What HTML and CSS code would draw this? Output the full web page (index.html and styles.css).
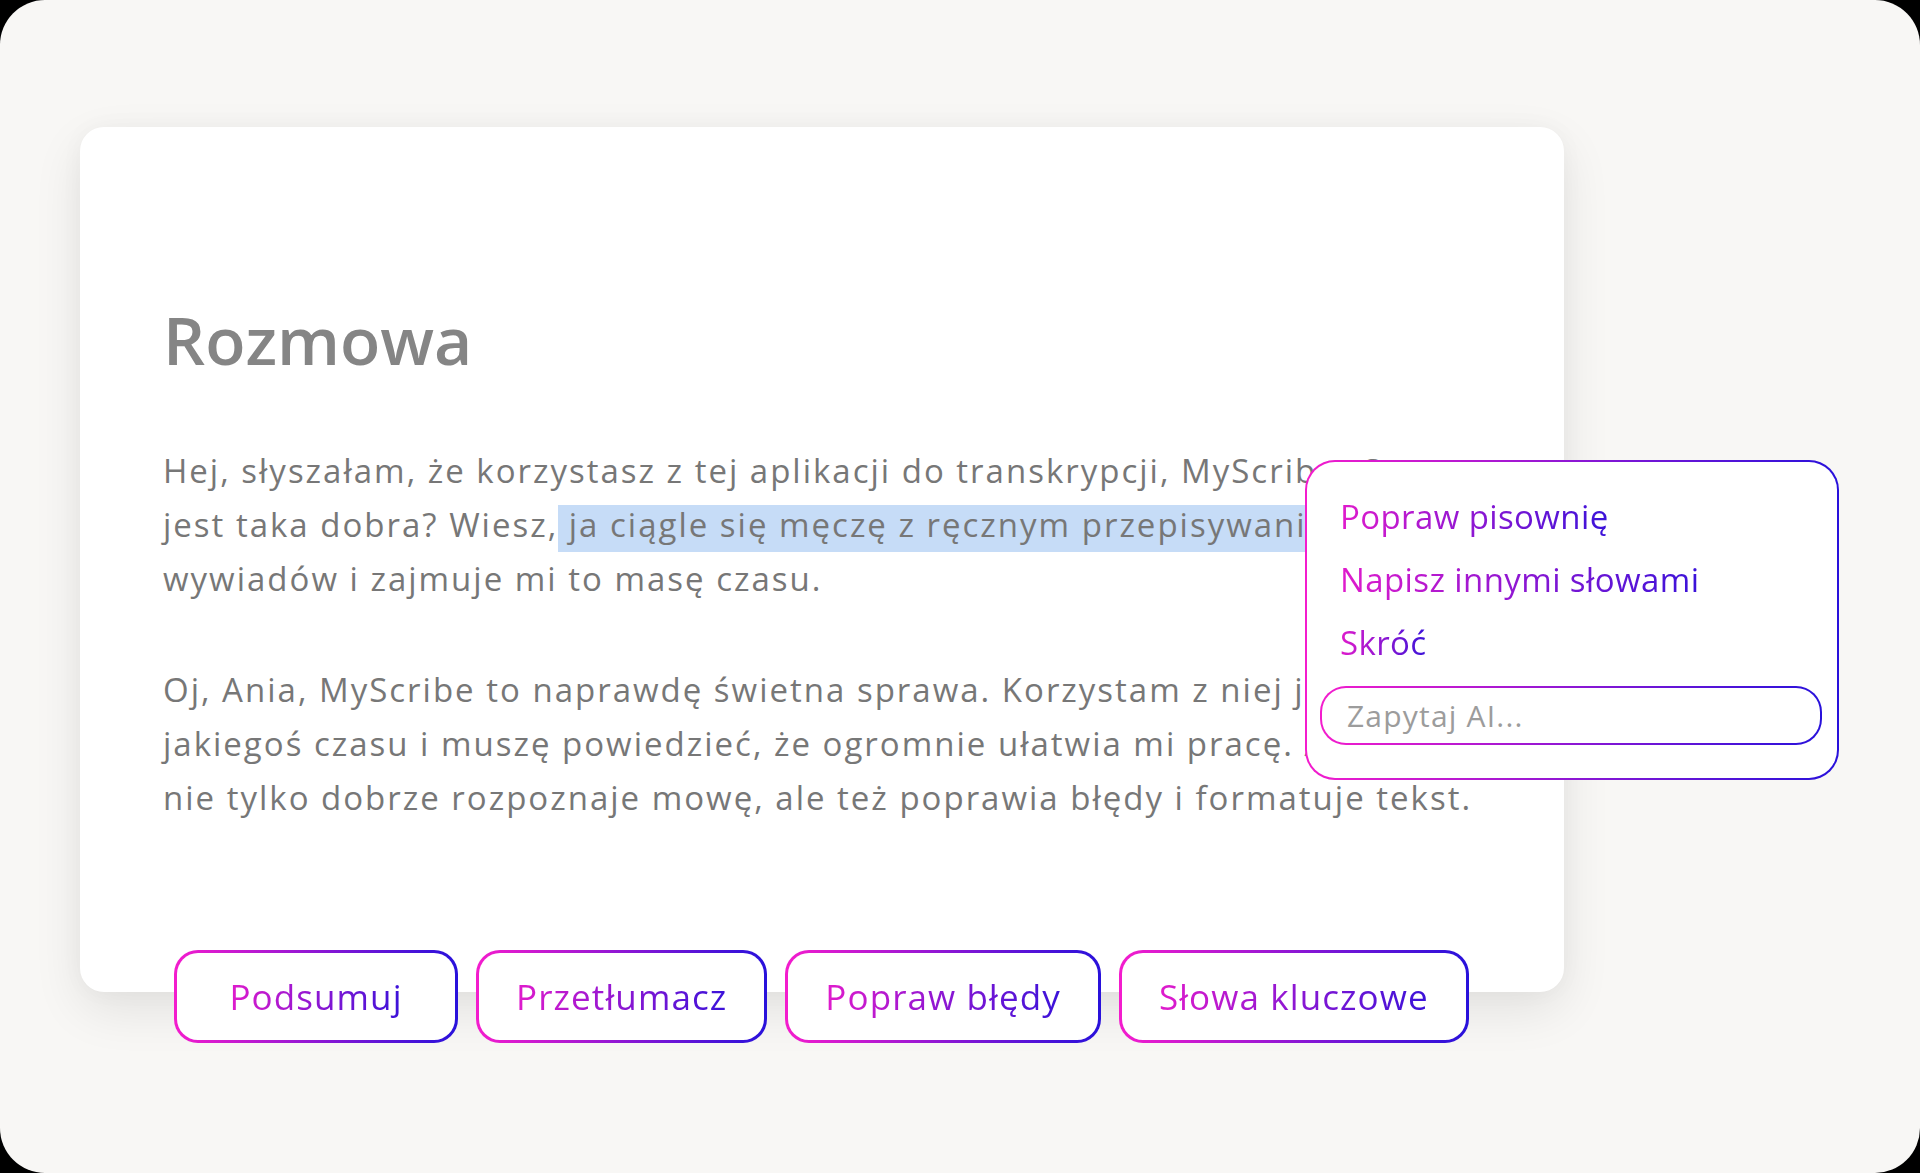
FILE: index.html
```html
<!DOCTYPE html>
<html lang="pl">
<head>
    <meta charset="UTF-8">
    <meta name="viewport" content="width=device-width, initial-scale=1.0">
    <title>MyScribe - Rozmowa</title>
    <link rel="stylesheet" href="styles.css">
</head>
<body>
    <div class="frame">
        <div class="card">
            <h1 class="title">Rozmowa</h1>
            <p class="text">Hej, słyszałam, że korzystasz z tej aplikacji do transkrypcji, MyScribe. Czy ona<br>jest taka dobra? Wiesz,<span class="selected"> ja ciągle się męczę z ręcznym przepisywaniem</span><br>wywiadów i zajmuje mi to masę czasu.</p>
            <p class="text">Oj, Ania, MyScribe to naprawdę świetna sprawa. Korzystam z niej już od<br>jakiegoś czasu i muszę powiedzieć, że ogromnie ułatwia mi pracę. Aplikacja<br>nie tylko dobrze rozpoznaje mowę, ale też poprawia błędy i formatuje tekst.</p>

            <div class="actions">
                <button class="action"><span class="grad-text">Podsumuj</span></button>
                <button class="action"><span class="grad-text">Przetłumacz</span></button>
                <button class="action"><span class="grad-text">Popraw błędy</span></button>
                <button class="action"><span class="grad-text">Słowa kluczowe</span></button>
            </div>
        </div>

        <div class="ai-menu">
            <div class="menu-item"><span class="grad-text">Popraw pisownię</span></div>
            <div class="menu-item"><span class="grad-text">Napisz innymi słowami</span></div>
            <div class="menu-item"><span class="grad-text">Skróć</span></div>
            <input type="text" class="ask-input" placeholder="Zapytaj AI...">
        </div>
    </div>
</body>
</html>
```

FILE: styles.css
```css
:root {
    --pink: #f41ccd;
    --blue: #2811db;
    --text-pink: #e01bcc;
    --text-blue: #3a12d9;
    --bg: #f8f7f5;
    --text-color: #777777;
    --title-color: #858585;
    --selection: #c6dcf7;
}

* {
    margin: 0;
    padding: 0;
    box-sizing: border-box;
}

body {
    background-color: #000;
    font-family: 'Open Sans', 'Noto Sans', sans-serif;
    overflow: hidden;
}

.frame {
    position: relative;
    width: 100vw;
    height: 100vh;
    background-color: var(--bg);
    border-radius: 45px;
    padding: 127px 0 0 80px;
}

.card {
    display: flow-root;
    width: 1484px;
    background-color: #fff;
    border-radius: 24px;
    box-shadow: 0 18px 50px rgba(0, 0, 0, 0.09), 0 0 24px rgba(0, 0, 0, 0.03);
    padding: 172px 83px 0;
}

.title {
    font-size: 66px;
    font-weight: 600;
    line-height: 80px;
    color: var(--title-color);
    margin-bottom: 65px;
}

.text {
    font-size: 33px;
    line-height: 54px;
    letter-spacing: 2px;
    color: var(--text-color);
    white-space: nowrap;
}

.text + .text {
    margin-top: 57px;
}

.selected {
    background: linear-gradient(transparent 4px, var(--selection) 4px);
    padding: 1px 0 5px;
}

.actions {
    display: flex;
    gap: 18px;
    margin: 125px 0 -51px 11px;
}

.action {
    min-width: 284px;
    height: 93px;
    padding: 0 37px;
    border: 3px solid transparent;
    border-radius: 24px;
    background: linear-gradient(#fff, #fff) padding-box,
                linear-gradient(90deg, var(--pink), var(--blue)) border-box;
    font-family: inherit;
    font-size: 35px;
    letter-spacing: 1.1px;
    cursor: pointer;
}

.grad-text {
    background: linear-gradient(90deg, var(--text-pink), var(--text-blue));
    -webkit-background-clip: text;
    background-clip: text;
    color: transparent;
}

.ai-menu {
    position: absolute;
    left: 1305px;
    top: 460px;
    width: 534px;
    height: 320px;
    padding: 23px 15px 0 13px;
    border: 2px solid transparent;
    border-radius: 30px;
    background: linear-gradient(#fff, #fff) padding-box,
                linear-gradient(90deg, var(--pink), var(--blue)) border-box;
}

.menu-item {
    font-size: 33px;
    line-height: 63px;
    letter-spacing: 0.4px;
    padding-left: 20px;
    cursor: pointer;
}

.ask-input {
    display: block;
    width: 100%;
    height: 59px;
    margin-top: 12px;
    padding: 0 25px;
    border: 2px solid transparent;
    border-radius: 26px;
    background: linear-gradient(#fff, #fff) padding-box,
                linear-gradient(90deg, var(--pink), var(--blue)) border-box;
    font-family: inherit;
    font-size: 30px;
    letter-spacing: 1.2px;
    color: #555;
    outline: none;
}

.ask-input::placeholder {
    color: #9c9c9c;
}
```
